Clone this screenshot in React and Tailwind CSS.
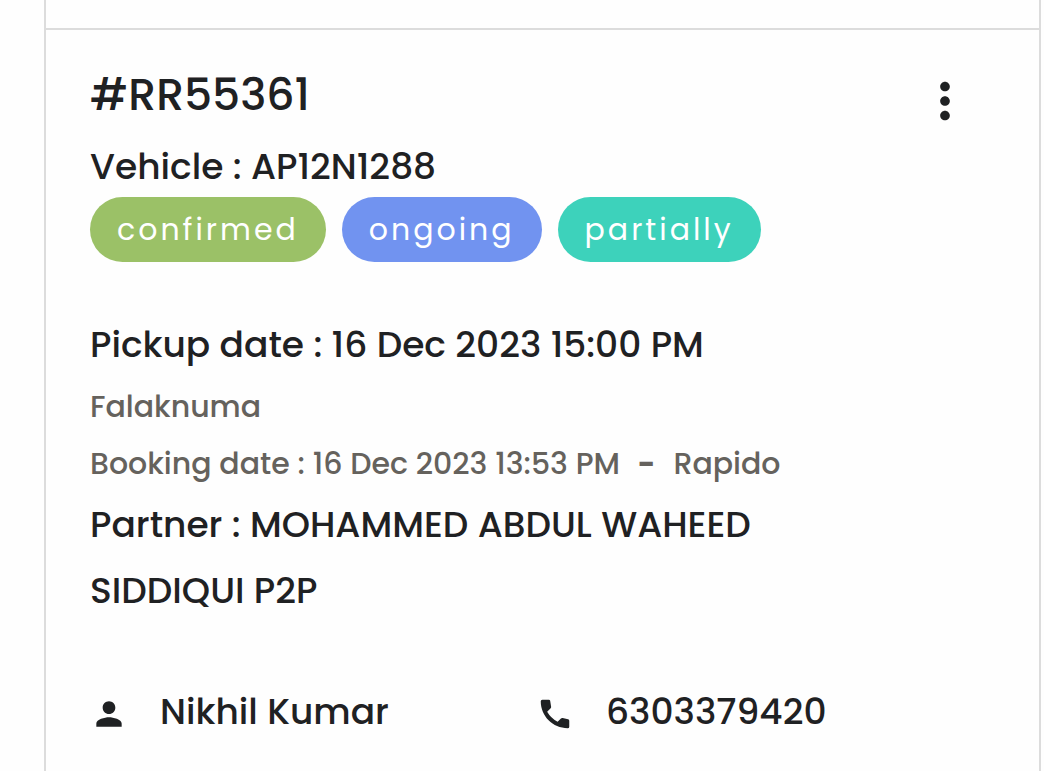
import { MdMoreVert, MdPerson } from 'react-icons/md';

const booking = {
    id: '#RR55361',
    vehicle: 'AP12N1288',
    pickupDate: '16 Dec 2023 15:00 PM',
    location: 'Falaknuma',
    bookingDate: '16 Dec 2023 13:53 PM',
    source: 'Rapido',
    partner: 'MOHAMMED ABDUL WAHEED SIDDIQUI P2P',
    customer: 'Nikhil Kumar',
    phone: '6303379420',
    statuses: ['confirmed', 'ongoing', 'partially'],
};

const statusColors = {
    confirmed: 'bg-[#9bc167]',
    ongoing: 'bg-[#7193f0]',
    partially: 'bg-[#3dd2bb]',
};

function PhoneIcon({ className }) {
    return (
        <svg viewBox="0 0 24 24" fill="currentColor" aria-hidden="true" className={className}>
            <path d="M4 3h4.1q.7 0 .85.7l.6 3.7q.1.6-.3 1l-2.2 2.1q2.3 4 6.6 6.4l2.1-2.1q.45-.45 1.1-.3l3.4.8q.75.15.75.9V20q0 1-1 1C10.6 21 3 13.4 3 4q0-1 1-1z" />
        </svg>
    );
}

function StatusPill({ status }) {
    return (
        <li className={`rounded-full px-[27px] text-[30px] leading-[65px] tracking-[3px] text-white ${statusColors[status]}`}>
            {status}
        </li>
    );
}

function BookingCard({ item }) {
    return (
        <article className="border-t-2 border-[#dcdcdc] pt-[31px] pr-[57px] pb-6 pl-11 text-[36px] leading-[66px] font-medium">
            <header className="flex items-start justify-between">
                <div>
                    <h2 className="text-[44px] leading-[68px] font-medium">{item.id}</h2>
                    <p className="mt-2 leading-[60px]">{`Vehicle : ${item.vehicle}`}</p>
                </div>
                <button type="button" aria-label="More actions" className="mt-[3px] p-2">
                    <MdMoreVert className="size-[58px]" />
                </button>
            </header>

            <ul className="flex flex-wrap gap-4 font-normal">
                {item.statuses.map((status) => (
                    <StatusPill key={status} status={status} />
                ))}
            </ul>

            <p className="mt-[50px]">{`Pickup date : ${item.pickupDate}`}</p>
            <div className="text-[30px] leading-[57px] text-[#65625d]">
                <p>{item.location}</p>
                <p className="flex gap-[18px]">
                    <span>{`Booking date : ${item.bookingDate}`}</span>
                    <span className="font-bold">-</span>
                    <span>{item.source}</span>
                </p>
            </div>
            <p className="max-w-[700px]">{`Partner : ${item.partner}`}</p>

            <div className="mt-[55px] grid grid-cols-2">
                <div className="flex items-center gap-8">
                    <MdPerson className="mt-1 size-[38px]" />
                    <span>{item.customer}</span>
                </div>
                <div className="flex items-center gap-8">
                    <PhoneIcon className="mt-1 size-[38px]" />
                    <a href={`tel:${item.phone}`}>{item.phone}</a>
                </div>
            </div>
        </article>
    );
}

export default function App() {
    return (
        <main className="min-h-screen bg-[#fefefe] pr-[3px] pl-11 font-[Poppins,Inter,sans-serif] text-[#1f2123]">
            <div className="min-h-screen border-x-2 border-[#dcdcdc] pt-7">
                <BookingCard item={booking} />
            </div>
        </main>
    );
}
